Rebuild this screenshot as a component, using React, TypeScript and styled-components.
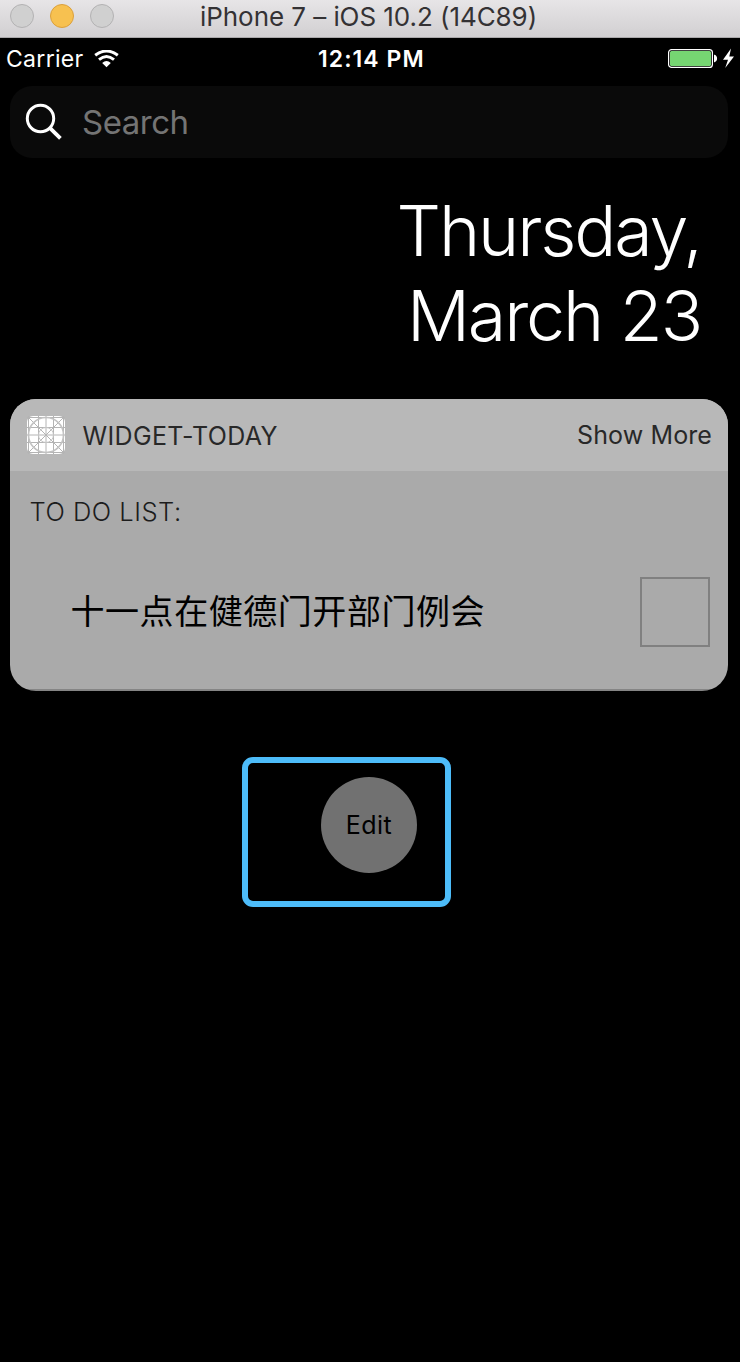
import React from "react";
import styled, { createGlobalStyle } from "styled-components";

const GlobalStyle = createGlobalStyle`
  * { box-sizing: border-box; }
  body {
    margin: 0;
    background: #000;
    font-family: Inter, "Noto Sans CJK SC", sans-serif;
  }
`;

const Simulator = styled.div`
  width: 740px;
  height: 1362px;
  overflow: hidden;
  display: flex;
  flex-direction: column;
  background: #000;
`;

const TitleBar = styled.header`
  height: 38px;
  flex: none;
  display: grid;
  grid-template-columns: 200px 1fr;
  background: linear-gradient(#e7e5e7, #d1cfd1);
  border-bottom: 1px solid #aaa8aa;
`;

const WindowControls = styled.div`
  display: flex;
  gap: 16px;
  padding: 4px 0 0 10px;
`;

const Control = styled.span<{ $active?: boolean }>`
  width: 24px;
  height: 24px;
  border-radius: 50%;
  border: 1px solid ${(p) => (p.$active ? "#dba03c" : "#b3b2b3")};
  background: ${(p) => (p.$active ? "#f7c150" : "#d0d0d0")};
`;

const WindowTitle = styled.h1`
  margin: 0;
  font-size: 26px;
  font-weight: 400;
  line-height: 33px;
  letter-spacing: -0.06px;
  color: #343234;
  white-space: nowrap;
`;

const StatusBar = styled.div`
  height: 42px;
  flex: none;
  display: grid;
  grid-template-columns: 318px 1fr auto;
  color: #fff;
  font-size: 23px;
  line-height: 42px;
  white-space: nowrap;
`;

const CarrierGroup = styled.div`
  display: flex;
  align-items: center;
  gap: 10px;
  padding-left: 6px;
  letter-spacing: 0.3px;
`;

const Clock = styled.div`
  font-weight: 600;
  letter-spacing: 1.05px;
`;

const Power = styled.div`
  display: flex;
  align-items: center;
  padding-right: 4px;
`;

const SearchField = styled.div`
  height: 72px;
  flex: none;
  margin: 6px 12px 0 10px;
  padding-left: 14px;
  display: flex;
  align-items: center;
  gap: 18px;
  border-radius: 22px;
  background: #0a0a0a;
  color: #747474;
  font-size: 33px;
  letter-spacing: -0.5px;
`;

const DateHeading = styled.h2`
  margin: 30px 39px 0 0;
  font-size: 70px;
  font-weight: 300;
  line-height: 85px;
  letter-spacing: -2.1px;
  text-align: right;
  color: #fff;
`;

const Widget = styled.section`
  height: 292px;
  flex: none;
  margin: 41px 12px 0 10px;
  border-radius: 26px;
  overflow: hidden;
  background: linear-gradient(#aaa 290px, #858585 290px);
`;

const WidgetHeader = styled.div`
  height: 72px;
  display: flex;
  align-items: center;
  padding: 0 16px;
  background: #b8b8b8;
  color: #282828;
  font-size: 25px;
`;

const WidgetName = styled.span`
  flex: 1;
  padding: 2px 0 0 16.5px;
  letter-spacing: 0.35px;
`;

const ShowMore = styled.span`
  letter-spacing: 0.1px;
`;

const ListTitle = styled.div`
  padding: 26px 0 0 19.5px;
  font-size: 25.5px;
  font-weight: 300;
  line-height: 30px;
  letter-spacing: 0.5px;
  color: #1c1c1c;
`;

const TodoRow = styled.div`
  display: flex;
  align-items: center;
  justify-content: space-between;
  margin-top: 50px;
  padding: 0 18px 0 60.5px;
`;

const TodoText = styled.span`
  padding-bottom: 4px;
  font-family: "Noto Sans CJK SC", sans-serif;
  font-size: 34px;
  line-height: 50px;
  letter-spacing: 0.55px;
  font-weight: 400;
  color: #000;
`;

const Checkbox = styled.span`
  width: 70px;
  height: 70px;
  border: 2px solid #808080;
`;

const Highlight = styled.div`
  width: 209px;
  height: 149.5px;
  margin: 66px 0 0 242px;
  padding: 14px 0 0 73px;
  border: 6px solid #4dbcf9;
  border-radius: 11px;
`;

const EditButton = styled.button`
  width: 96px;
  height: 96px;
  padding: 0;
  border: 0;
  border-radius: 50%;
  background: #717171;
  color: #000;
  font: 400 25px Inter, sans-serif;
  letter-spacing: 0.5px;
`;

const WifiIcon = () => (
  <svg width="25" height="19" viewBox="0 0 25 19" fill="none" stroke="#fff">
    <path d="M1.2 5.3Q12.5-3.2 23.8 5.3" strokeWidth="3" />
    <path d="M5 9.6Q12.5 3.2 20 9.6" strokeWidth="2.9" />
    <path d="M8.2 13Q12.5 9 16.8 13L12.5 17.3Z" fill="#fff" stroke="none" />
  </svg>
);

const BatteryIcon = () => (
  <svg width="68" height="22" viewBox="0 0 68 22">
    <rect x="0.6" y="1.6" width="43.8" height="17.8" rx="3" fill="none" stroke="#fff" strokeWidth="1.2" />
    <rect x="2" y="3" width="41" height="15" rx="1.5" fill="#76d672" />
    <path d="M46 6.8H46.6C49.9 7.8 49.9 13.2 46.6 14.2H46Z" fill="#fff" />
    <path d="M63 0.5L55 11.8H60L57.2 20L66 8.4H61.3Z" fill="#fff" />
  </svg>
);

const SearchIcon = () => (
  <svg width="40" height="40" viewBox="0 0 40 40" fill="none" stroke="#fff">
    <circle cx="16.5" cy="16.5" r="13.2" strokeWidth="3" />
    <path d="M25.6 25.6L36.4 36.4" strokeWidth="3.8" />
  </svg>
);

const GridIcon = () => (
  <svg width="40" height="40" viewBox="0 0 40 40">
    <rect x="1" y="1" width="38" height="38" rx="6" fill="#fff" />
    <g fill="none" stroke="#b4b4b4">
      <path d="M2.5 1V39M12.5 1V39M20 1V39M27.5 1V39M37.5 1V39M1 2.5H39M1 12.5H39M1 20H39M1 27.5H39M1 37.5H39M2.5 2.5L37.5 37.5M37.5 2.5L2.5 37.5" />
      <circle cx="20" cy="20" r="17.5" stroke="#c2c2c2" strokeWidth="1.6" />
      <circle cx="20" cy="20" r="7.5" stroke="#c6c6c6" />
    </g>
  </svg>
);

export default function App() {
  return (
    <Simulator>
      <GlobalStyle />
      <TitleBar>
        <WindowControls>
          <Control />
          <Control $active />
          <Control />
        </WindowControls>
        <WindowTitle>iPhone 7 – iOS 10.2 (14C89)</WindowTitle>
      </TitleBar>
      <StatusBar>
        <CarrierGroup>
          <span>Carrier</span>
          <WifiIcon />
        </CarrierGroup>
        <Clock>12:14 PM</Clock>
        <Power>
          <BatteryIcon />
        </Power>
      </StatusBar>
      <SearchField>
        <SearchIcon />
        <span>Search</span>
      </SearchField>
      <DateHeading>
        Thursday,
        <br />
        March 23
      </DateHeading>
      <Widget>
        <WidgetHeader>
          <GridIcon />
          <WidgetName>WIDGET-TODAY</WidgetName>
          <ShowMore>Show More</ShowMore>
        </WidgetHeader>
        <ListTitle>TO DO LIST:</ListTitle>
        <TodoRow>
          <TodoText>十一点在健德门开部门例会</TodoText>
          <Checkbox />
        </TodoRow>
      </Widget>
      <Highlight>
        <EditButton>Edit</EditButton>
      </Highlight>
    </Simulator>
  );
}
